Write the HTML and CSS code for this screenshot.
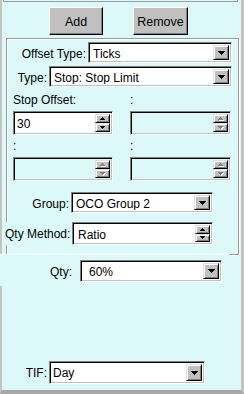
FILE: index.html
```html
<!DOCTYPE html>
<html>
<head>
<meta charset="utf-8">
<link rel="stylesheet" href="styles.css">
</head>
<body>
<div class="win">
  <div class="stub"></div>
  <div class="btnrow">
    <div class="btn add">Add</div>
    <div class="btn remove">Remove</div>
  </div>
  <div class="group">
    <div class="row r-off">
      <span class="lbl w-off">Offset Type:</span>
      <div class="combo c-off"><span class="val">Ticks</span><span class="dd"><svg width="7" height="4"><path d="M0 0h7v1h-1v1h-1v1h-1v1h-1v-1h-1v-1h-1v-1h-1z"/></svg></span></div>
    </div>
    <div class="row r-type">
      <span class="lbl w-type">Type:</span>
      <div class="combo c-type"><span class="val">Stop: Stop Limit</span><span class="dd"><svg width="7" height="4"><path d="M0 0h7v1h-1v1h-1v1h-1v1h-1v-1h-1v-1h-1v-1h-1z"/></svg></span></div>
    </div>
    <div class="grid">
      <div class="cell">
        <span class="clbl">Stop Offset:</span>
        <div class="spin"><span class="val">30</span><span class="sb"><span class="sbtn"><svg width="5" height="3"><path d="M2 0h1v1h1v1h1v1h-5v-1h1v-1h1z"/></svg></span><span class="sbtn"><svg width="5" height="3"><path d="M0 0h5v1h-1v1h-1v1h-1v-1h-1v-1h-1z"/></svg></span></span></div>
      </div>
      <div class="cell">
        <span class="clbl">:</span>
        <div class="spin off"><span class="val"></span><span class="sb"><span class="sbtn"><svg width="6" height="4"><path d="M3 1h1v1h1v1h1v1h-5v-1h1v-1h1z" fill="#fff"/><path d="M2 0h1v1h1v1h1v1h-5v-1h1v-1h1z"/></svg></span><span class="sbtn"><svg width="6" height="4"><path d="M1 1h5v1h-1v1h-1v1h-1v-1h-1v-1h-1z" fill="#fff"/><path d="M0 0h5v1h-1v1h-1v1h-1v-1h-1v-1h-1z"/></svg></span></span></div>
      </div>
      <div class="cell">
        <span class="clbl">:</span>
        <div class="spin off"><span class="val"></span><span class="sb"><span class="sbtn"><svg width="6" height="4"><path d="M3 1h1v1h1v1h1v1h-5v-1h1v-1h1z" fill="#fff"/><path d="M2 0h1v1h1v1h1v1h-5v-1h1v-1h1z"/></svg></span><span class="sbtn"><svg width="6" height="4"><path d="M1 1h5v1h-1v1h-1v1h-1v-1h-1v-1h-1z" fill="#fff"/><path d="M0 0h5v1h-1v1h-1v1h-1v-1h-1v-1h-1z"/></svg></span></span></div>
      </div>
      <div class="cell">
        <span class="clbl">:</span>
        <div class="spin off"><span class="val"></span><span class="sb"><span class="sbtn"><svg width="6" height="4"><path d="M3 1h1v1h1v1h1v1h-5v-1h1v-1h1z" fill="#fff"/><path d="M2 0h1v1h1v1h1v1h-5v-1h1v-1h1z"/></svg></span><span class="sbtn"><svg width="6" height="4"><path d="M1 1h5v1h-1v1h-1v1h-1v-1h-1v-1h-1z" fill="#fff"/><path d="M0 0h5v1h-1v1h-1v1h-1v-1h-1v-1h-1z"/></svg></span></span></div>
      </div>
    </div>
    <div class="row r-grp">
      <span class="lbl w-grp">Group:</span>
      <div class="combo c-grp"><span class="val">OCO Group 2</span><span class="dd"><svg width="7" height="4"><path d="M0 0h7v1h-1v1h-1v1h-1v1h-1v-1h-1v-1h-1v-1h-1z"/></svg></span></div>
    </div>
    <div class="row r-qm">
      <span class="lbl w-qm">Qty Method:</span>
      <div class="spin s-qm"><span class="val">Ratio</span><span class="sb"><span class="sbtn"><svg width="5" height="3"><path d="M2 0h1v1h1v1h1v1h-5v-1h1v-1h1z"/></svg></span><span class="sbtn"><svg width="5" height="3"><path d="M0 0h5v1h-1v1h-1v1h-1v-1h-1v-1h-1z"/></svg></span></span></div>
    </div>
  </div>
  <div class="qpanel">
    <div class="row r-qty">
      <span class="lbl w-qty">Qty:</span>
      <div class="combo c-qty"><span class="val">60%</span><span class="dd"><svg width="7" height="4"><path d="M0 0h7v1h-1v1h-1v1h-1v1h-1v-1h-1v-1h-1v-1h-1z"/></svg></span></div>
    </div>
  </div>
  <div class="row r-tif">
    <span class="lbl w-tif">TIF:</span>
    <div class="combo c-tif"><span class="val">Day</span><span class="dd"><svg width="7" height="4"><path d="M0 0h7v1h-1v1h-1v1h-1v1h-1v-1h-1v-1h-1v-1h-1z"/></svg></span></div>
  </div>
</div>
</body>
</html>
```

FILE: styles.css
```css
* { box-sizing: border-box; margin: 0; padding: 0; }
html, body { width: 244px; height: 394px; overflow: hidden; }
body {
  background: #dcf8f8;
  font: 12px "Liberation Sans", Arial, sans-serif;
  color: #000;
}
.win {
  height: 394px;
  border-left: 2px solid #c4c4c4;
  border-right: 3px solid #c4c4c4;
  border-bottom: 4px solid #a8a8a8;
  display: flex;
  flex-direction: column;
}
.stub {
  height: 2px;
  margin: 0 3px 0 1px;
  border: 1px solid #9c9c9c;
  border-top: 0;
}
.btnrow {
  display: flex;
  margin-top: 5px;
  padding-left: 47px;
  gap: 30px;
}
.btn {
  height: 28px;
  background: #c0c0c0;
  border: 1px solid;
  border-color: #fff #000 #000 #fff;
  box-shadow: inset -1px -1px #808080;
  display: flex;
  align-items: center;
  justify-content: center;
  padding-top: 1px;
  font-size: 12.5px;
}
.add { width: 54px; }
.remove { width: 55px; }

.group {
  margin: 3px 0 0 4px;
  width: 233px;
  height: 217px;
  border: 1px solid #9c9c9c;
  box-shadow: inset 1px 1px #fff, 1px 1px #fff;
  padding-top: 3px;
  display: flex;
  flex-direction: column;
}
.row { display: flex; align-items: stretch; }
.lbl {
  text-align: right;
  padding-top: 5px;
  line-height: 14px;
  white-space: nowrap;
}
.r-off { height: 21px; }
.w-off { width: 79px; }
.c-off { width: 144px; margin-left: 2px; }
.r-type { height: 21px; margin-top: 3px; }
.w-type { width: 40px; }
.c-type { width: 183px; margin-left: 2px; }

.combo {
  display: flex;
  background: #fff;
  border: 1px solid;
  border-color: #808080 #fff #fff #808080;
  box-shadow: inset 1px 1px #000, inset -1px -1px #c0c0c0;
  padding: 2px;
}
.combo .val {
  flex: 1;
  padding: 2px 0 0 2px;
  line-height: 14px;
  white-space: nowrap;
  overflow: hidden;
}
.dd {
  width: 16px;
  background: #c0c0c0;
  border: 1px solid;
  border-color: #dfdfdf #000 #000 #dfdfdf;
  box-shadow: inset 1px 1px #fff, inset -1px -1px #808080;
  display: flex;
  align-items: center;
  justify-content: center;
}
.dd svg { display: block; fill: #000; }

.grid {
  display: grid;
  grid-template-columns: 100px 101px;
  column-gap: 17px;
  row-gap: 4px;
  margin: 6px 0 0 6px;
}
.cell { display: flex; flex-direction: column; }
.clbl { line-height: 14px; height: 14px; }
.spin {
  margin-top: 4px;
  height: 24px;
  display: flex;
  background: #fff;
  border: 1px solid;
  border-color: #808080 #fff #fff #808080;
  box-shadow: inset 1px 1px #000, inset -1px -1px #c0c0c0;
  padding: 2px;
}
.spin.off { background: transparent; }
.spin .val {
  flex: 1;
  padding: 3px 0 0 1px;
  line-height: 14px;
}
.sb { width: 15px; display: flex; flex-direction: column; }
.sbtn {
  flex: 1;
  background: #c0c0c0;
  border: 1px solid;
  border-color: #dfdfdf #000 #000 #dfdfdf;
  box-shadow: inset 1px 1px #fff, inset -1px -1px #808080;
  display: flex;
  align-items: center;
  justify-content: center;
}
.sbtn svg { display: block; fill: #000; }
.spin.off .sbtn svg path:last-child { fill: #808080; }

.r-grp { height: 21px; margin-top: 11px; }
.w-grp { width: 62px; }
.c-grp { width: 142px; margin-left: 2px; }
.r-qm { height: 23px; margin-top: 9px; }
.w-qm {
  width: 65px;
  margin-left: -2px;
  background: #dcf8f8;
  position: relative;
}
.s-qm { width: 141px; height: 23px; margin-top: 0; margin-left: 2px; }
.s-qm .val { padding-left: 3px; }

.qpanel {
  position: relative;
  margin: -1px 0 0 -2px;
  width: 229px;
  background: #dcf8f8;
  border-top: 1px solid #f4ffff;
  padding: 5px 0 4px 0;
}
.r-qty { height: 22px; }
.w-qty { width: 72px; }
.c-qty { width: 142px; margin-left: 8px; }
.c-qty .val { padding-left: 6px; }

.r-tif { height: 23px; margin-top: auto; margin-bottom: 6px; }
.w-tif { width: 45px; }
.c-tif { width: 156px; margin-left: 2px; }
.c-tif .val { padding-left: 1px; }
```
